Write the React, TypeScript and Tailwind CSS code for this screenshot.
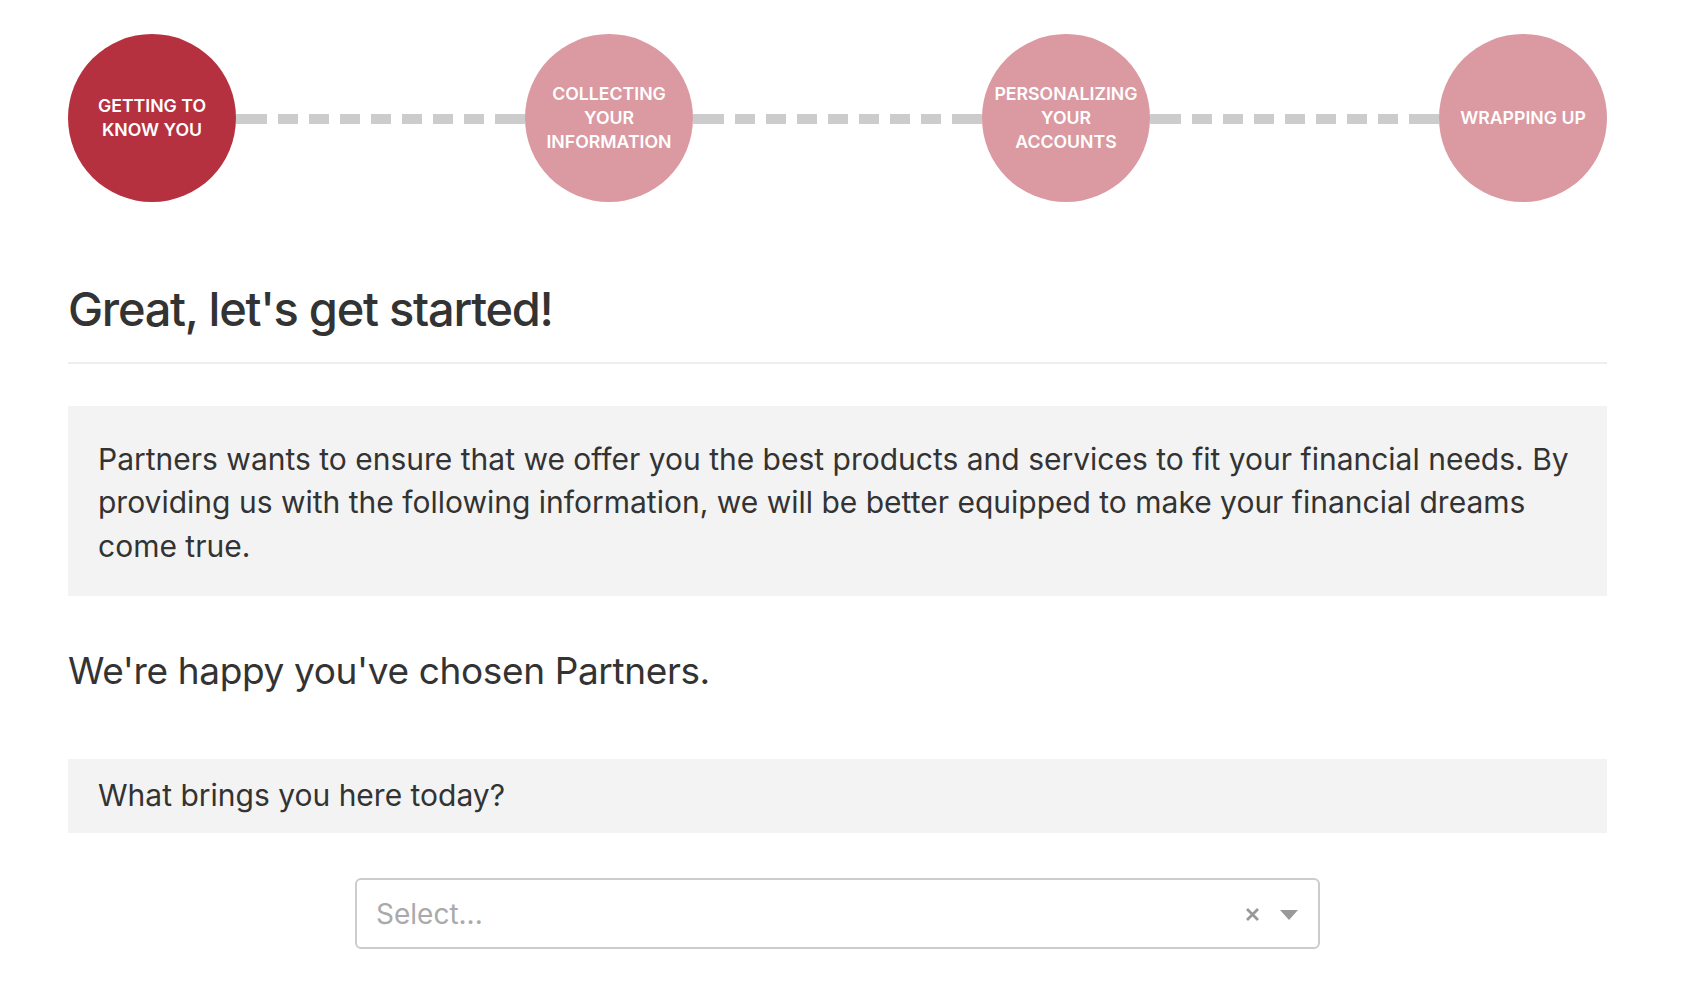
import { Fragment } from 'react'

const STEPS = [
  { label: ['GETTING TO', 'KNOW YOU'], active: true },
  { label: ['COLLECTING', 'YOUR', 'INFORMATION'], active: false },
  { label: ['PERSONALIZING', 'YOUR', 'ACCOUNTS'], active: false },
  { label: ['WRAPPING UP'], active: false },
]

function Connector() {
  return (
    <div className="mt-[2px] flex h-[10px] flex-1 gap-[11px]">
      <div className="flex-1 bg-[#cccccc]" />
      {Array.from({ length: 7 }).map((_, i) => (
        <div key={i} className="w-[20px] bg-[#cccccc]" />
      ))}
      <div className="flex-1 bg-[#cccccc]" />
    </div>
  )
}

function Step({ label, active }: { label: string[]; active: boolean }) {
  return (
    <div
      className={`flex h-[168px] w-[168px] shrink-0 flex-col items-center justify-center rounded-full text-center text-[17.7px] font-semibold leading-6 text-white ${
        active ? 'bg-[#b5313f]' : 'bg-[#db99a1]'
      }`}
    >
      {label.map(line => (
        <span key={line} className="whitespace-nowrap">{line}</span>
      ))}
    </div>
  )
}

export default function App() {
  return (
    <div className="min-h-screen bg-white pl-[68px] pr-[81px] font-['Inter','Liberation_Sans',sans-serif] text-[#333333]">
      <div className="flex items-center pt-[34px]">
        {STEPS.map((step, i) => (
          <Fragment key={step.label.join(' ')}>
            {i > 0 ? <Connector /> : null}
            <Step label={step.label} active={step.active} />
          </Fragment>
        ))}
      </div>

      <h1 className="mt-[81px] text-[47px] font-medium leading-[52px] tracking-[-0.027em]">
        Great, let's get started!
      </h1>
      <hr className="mt-[27px] border-t-2 border-[#eeeeee]" />

      <div className="mt-[42px] bg-[#f3f3f3] pb-[28px] pl-[30px] pr-[16px] pt-[32px] text-[30px] leading-[43.3px]">
        Partners wants to ensure that we offer you the best products and services to fit your financial needs. By
        providing us with the following information, we will be better equipped to make your financial dreams
        come true.
      </div>

      <h2 className="mt-[53px] text-[37px] leading-[44px] tracking-[-0.01em]">We're happy you've chosen Partners.</h2>

      <div className="mt-[66px] flex h-[74px] items-center bg-[#f3f3f3] pl-[30px] text-[30px]">
        What brings you here today?
      </div>

      <div className="mx-auto mt-[45px] flex h-[71px] w-[965px] items-center rounded-[6px] border-2 border-[#cccccc] pl-[19px] pr-[20px]">
        <span className="mt-[2px] flex-1 text-[28px] text-[#aaaaaa]">Select...</span>
        <svg width="15" height="15" viewBox="0 0 15 15" className="mr-[20px] mt-[2px]">
          <path d="M2 2 L13 13 M13 2 L2 13" stroke="#999999" strokeWidth="2.8" strokeLinecap="butt" />
        </svg>
        <svg width="18" height="10" viewBox="0 0 18 10" className="mt-[4px]">
          <path d="M0 0 L18 0 L9 10 Z" fill="#999999" />
        </svg>
      </div>
    </div>
  )
}
